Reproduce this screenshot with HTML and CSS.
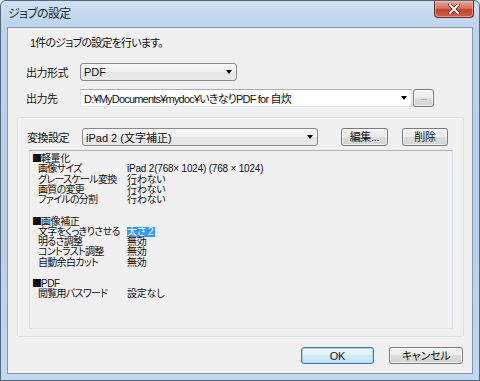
FILE: index.html
```html
<!DOCTYPE html>
<html lang="ja">
<head>
    <meta charset="UTF-8">
    <title>ジョブの設定</title>
    <link rel="stylesheet" href="styles.css">
</head>
<body>
    <div class="window">
        <div class="titlebar">
            <span class="title">ジョブの設定</span>
            <button class="close" aria-label="閉じる">
                <svg width="12" height="10" viewBox="0 0 12 10">
                    <path d="M2 1 L10 9 M10 1 L2 9" stroke="#4a1a14" stroke-width="3.4" stroke-linecap="square"/>
                    <path d="M2 1 L10 9 M10 1 L2 9" stroke="#ffffff" stroke-width="2" stroke-linecap="square"/>
                </svg>
            </button>
        </div>

        <div class="client">
            <p class="intro">1件のジョブの設定を行います。</p>

            <div class="row row-format">
                <label class="label">出力形式</label>
                <div class="select select-format">
                    <span>PDF</span>
                    <i class="arrow"></i>
                </div>
            </div>

            <div class="row row-dest">
                <label class="label">出力先</label>
                <div class="combo">
                    <span>D:¥MyDocuments¥mydoc¥いきなりPDF for 自炊</span>
                    <i class="arrow"></i>
                </div>
                <button class="btn btn-browse">...</button>
            </div>

            <div class="panel">
                <div class="row row-preset">
                    <label class="label">変換設定</label>
                    <div class="select select-preset">
                        <span>iPad 2 (文字補正)</span>
                        <i class="arrow"></i>
                    </div>
                    <button class="btn btn-edit">編集...</button>
                    <button class="btn btn-delete">削除</button>
                </div>

                <div class="info">
                    <div class="section">
                        <div class="section-title"><span class="mark">■</span>軽量化</div>
                        <div class="item"><span class="key">画像サイズ</span><span>iPad 2(768× 1024) (768 × 1024)</span></div>
                        <div class="item"><span class="key">グレースケール変換</span><span>行わない</span></div>
                        <div class="item"><span class="key">画質の変更</span><span>行わない</span></div>
                        <div class="item"><span class="key">ファイルの分割</span><span>行わない</span></div>
                    </div>
                    <div class="section">
                        <div class="section-title"><span class="mark">■</span>画像補正</div>
                        <div class="item"><span class="key">文字をくっきりさせる</span><span><span class="selected">太さ 2</span></span></div>
                        <div class="item"><span class="key">明るさ調整</span><span>無効</span></div>
                        <div class="item"><span class="key">コントラスト調整</span><span>無効</span></div>
                        <div class="item"><span class="key">自動余白カット</span><span>無効</span></div>
                    </div>
                    <div class="section">
                        <div class="section-title"><span class="mark">■</span>PDF</div>
                        <div class="item"><span class="key">閲覧用パスワード</span><span>設定なし</span></div>
                    </div>
                </div>
            </div>

            <div class="footer">
                <button class="btn btn-default">OK</button>
                <button class="btn btn-cancel">キャンセル</button>
            </div>
        </div>
    </div>
</body>
</html>
```

FILE: styles.css
```css
body {
    margin: 0;
    background-color: #dfe8f1;
    font-family: "Liberation Sans", "Noto Sans CJK JP", sans-serif;
    font-size: 11px;
    font-feature-settings: "palt" 1;
    letter-spacing: -0.5px;
    color: #111;
}

.window {
    width: 480px;
    height: 381px;
    box-sizing: border-box;
    border: 1px solid #55677b;
    border-radius: 6px 6px 0 0;
    background: linear-gradient(to bottom, #cfe0f2, #bcd3ec 26px, #b9d0ea 60%, #c3d7ee);
    padding: 0 6px 6px;
    display: flex;
    flex-direction: column;
}

.titlebar {
    height: 26px;
    display: flex;
    justify-content: space-between;
    align-items: flex-start;
}

.title {
    margin: 4px 0 0 1px;
    font-size: 12px;
    line-height: 18px;
    letter-spacing: -0.7px;
    color: #1b2733;
}

.close {
    width: 40px;
    height: 17px;
    margin-right: -1px;
    padding: 0;
    border: 1px solid #6b2a20;
    border-top: none;
    border-radius: 0 0 4px 4px;
    background: linear-gradient(to bottom, #e9a99b, #d9705c 45%, #c2432f 55%, #d0604a);
    box-shadow: inset 0 0 0 1px rgba(255, 200, 190, 0.5);
    display: flex;
    align-items: center;
    justify-content: center;
}

.client {
    flex: 1;
    border: 1px solid #8597ad;
    background-color: #f0f0f0;
    display: flex;
    flex-direction: column;
}

.intro {
    margin: 8px 0 0 22px;
    line-height: 14px;
    letter-spacing: -0.8px;
}

.row {
    display: flex;
    align-items: center;
    height: 18px;
}

.row-format {
    margin: 13px 0 0 18px;
}

.row-dest {
    margin: 8px 0 0 18px;
}

.label {
    width: 54px;
    flex-shrink: 0;
}

.select,
.combo {
    height: 18px;
    box-sizing: border-box;
    display: flex;
    align-items: center;
    justify-content: space-between;
    padding: 0 4px 0 3px;
    white-space: nowrap;
    letter-spacing: 0;
}

.select {
    border: 1px solid #8a8a8a;
    border-radius: 3px;
    background: linear-gradient(to bottom, #f8f8f8, #f0f0f0 50%, #e4e4e4 50%, #e9e9e9);
}

.select-format {
    width: 157px;
}

.combo {
    width: 332px;
    border: 1px solid;
    border-color: #abadb3 #dbdfe6 #e3e9ef #e2e3ea;
    background-color: #fff;
    letter-spacing: -0.8px;
}

.arrow {
    width: 0;
    height: 0;
    border-top: 4px solid #000;
    border-left: 3px solid transparent;
    border-right: 3px solid transparent;
}

.btn {
    height: 18px;
    box-sizing: border-box;
    padding: 0;
    border: 1px solid #7a7a7a;
    border-radius: 3px;
    background: linear-gradient(to bottom, #f3f3f3, #ebebeb 50%, #dddddd 50%, #d2d2d2);
    box-shadow: inset 0 0 0 1px rgba(255, 255, 255, 0.7);
    font-family: inherit;
    font-size: 11px;
    font-feature-settings: "palt" 1;
    letter-spacing: -0.3px;
    line-height: 14px;
    color: #111;
}

.btn-browse {
    width: 21px;
    margin-left: 1px;
    font-size: 8px;
    color: #666;
}

.panel {
    margin: 10px 0 0 9px;
    width: 447px;
    height: 220px;
    box-sizing: border-box;
    border: 1px solid #d5dfe5;
    border-radius: 2px;
    box-shadow: inset 1px 1px 0 #fbfbfb;
    padding: 10px 10px 7px 9px;
}

.row-preset .label {
    width: 55px;
}

.select-preset {
    width: 236px;
}

.btn-edit {
    width: 47px;
    margin-left: 23px;
}

.btn-delete {
    width: 46px;
    margin-left: 14px;
}

.info {
    margin: 4px 0 0 2px;
    width: 424px;
    height: 179px;
    box-sizing: border-box;
    border: 1px solid;
    border-color: #a9b4c0 #d6dde5 #d9e1e9 #d3dae3;
    background-color: #f0f0f0;
    padding: 2px 0 0 2px;
    font-size: 10px;
    letter-spacing: -0.2px;
    line-height: 10.25px;
}

.section + .section {
    margin-top: 10.25px;
}

.section-title {
    letter-spacing: -0.4px;
}

.mark {
    font-family: "Noto Sans CJK JP", sans-serif;
    letter-spacing: -1px;
}

.item {
    display: grid;
    grid-template-columns: 89px auto;
    padding-left: 6px;
    white-space: nowrap;
}

.key {
    letter-spacing: -0.7px;
}

.selected {
    display: inline-block;
    height: 10.25px;
    padding-right: 2px;
    background-color: #3399ff;
    color: #fff;
    vertical-align: top;
}

.footer {
    display: flex;
    justify-content: flex-end;
    gap: 15px;
    margin-top: 10px;
    padding-right: 9px;
}

.footer .btn {
    height: 17px;
}

.btn-default {
    width: 73px;
    border-color: #3c7fb1;
    background: linear-gradient(to bottom, #f1f8fd, #e3f1fb 50%, #d2e9f8 50%, #c9e4f6);
    box-shadow: inset 0 0 0 1px #a7d6f3;
}

.btn-cancel {
    width: 74px;
}
```
